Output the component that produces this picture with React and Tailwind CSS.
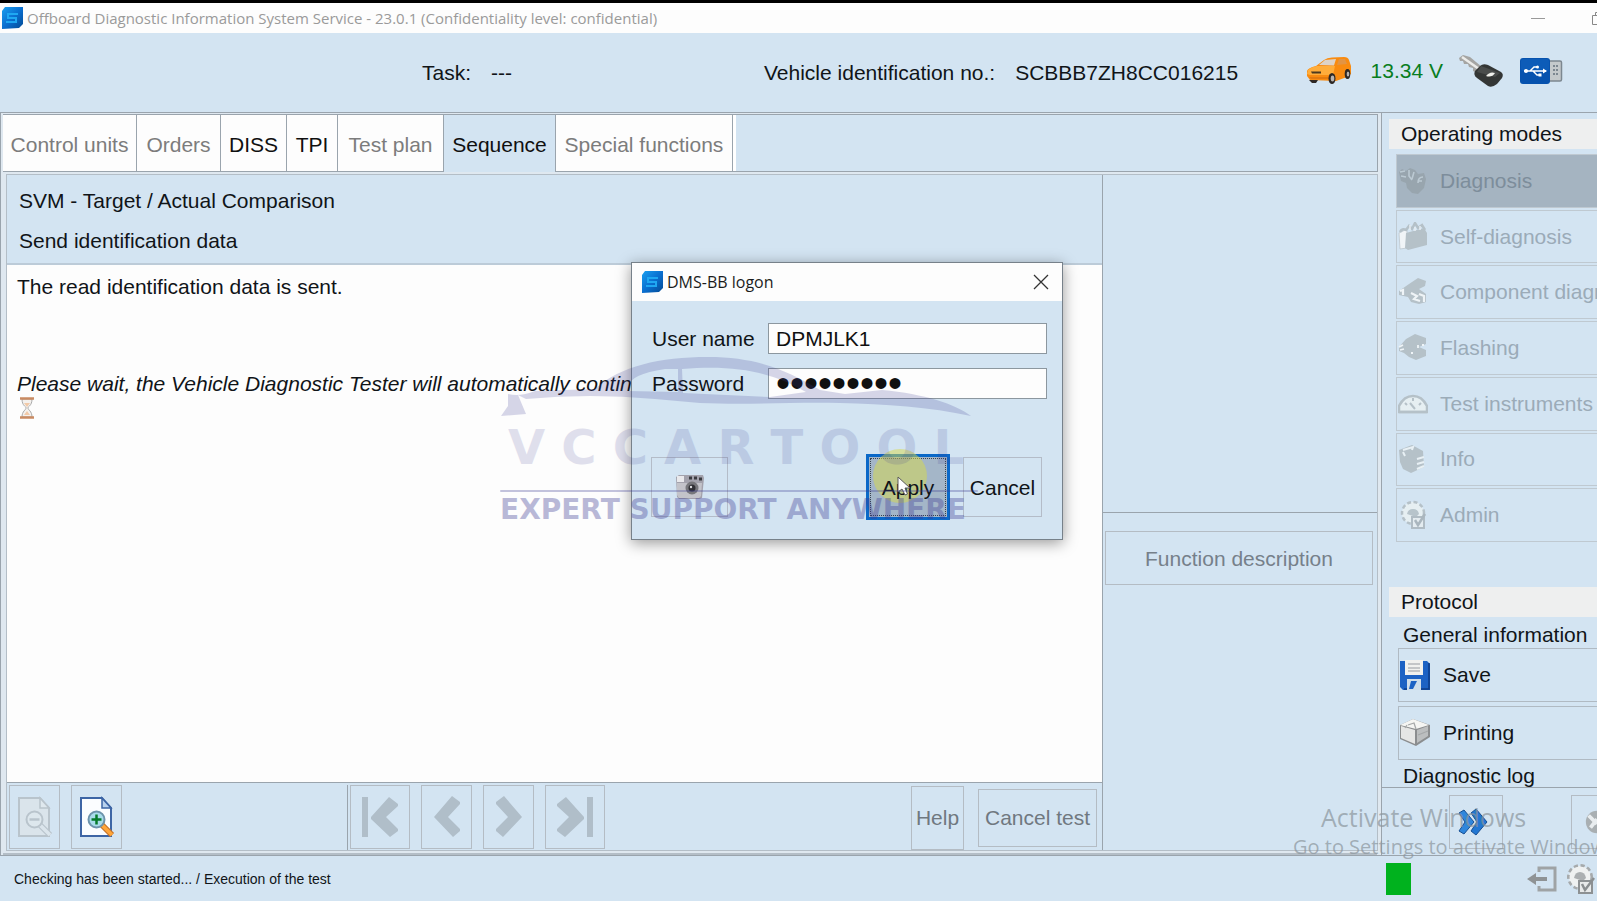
import React from "react";

const NAV = "#b0bec9";

function AppLogo({ className }) {
  return (
    <svg viewBox="0 0 22 22" className={className} aria-hidden="true">
      <defs>
        <linearGradient id="logoFill" x1="0" y1="0" x2="1" y2="1">
          <stop offset="0" stopColor="#1aa0f0" />
          <stop offset="0.5" stopColor="#0a6fd0" />
          <stop offset="1" stopColor="#034a94" />
        </linearGradient>
      </defs>
      <path d="M4 0H22V17L18 21L1 22V4Z" fill="url(#logoFill)" />
      <path d="M17 7H7V11H15V15H5" fill="none" stroke="#1fa8f2" strokeWidth="2" />
    </svg>
  );
}

function CarIcon() {
  return (
    <svg viewBox="0 0 46 30" className="mr-1 h-[30px] w-[46px] shrink-0" aria-hidden="true">
      <path d="M1 15Q2 12 10 10L18 4Q21 1.500 26 1.500L38 1Q42 1 43 4L45 10V18L41 21L30 25L4 24L1 20Z" fill="#f98b10" />
      <path d="M2 14Q5 11 11 10L29 10L27 19L4 19L1 18Z" fill="#ffad3b" />
      <path d="M13 9L19 4L30 3L28 9.500Z" fill="#ddd3c8" />
      <path d="M31 9L33 3L39 3L41 8Z" fill="#e39443" />
      <path d="M5 15.500H15V17.500H6Z" fill="#4c3a20" />
      <path d="M3 21H24V23H5Z" fill="#e27a10" />
      <ellipse cx="26" cy="22.500" rx="3.500" ry="5.500" fill="#2d2724" />
      <ellipse cx="26.500" cy="22.500" rx="1.800" ry="3" fill="#b9b4b0" />
      <ellipse cx="41.500" cy="18" rx="2.800" ry="5" fill="#2d2724" />
      <ellipse cx="42" cy="18" rx="1.300" ry="2.600" fill="#b9b4b0" />
      <path d="M3 24H12L10 27H6Z" fill="#2d2724" />
    </svg>
  );
}

function KeyIcon() {
  return (
    <svg viewBox="0 0 46 34" className="h-[34px] w-[46px] shrink-0" aria-hidden="true">
      <path d="M1 4L5 1L12 3L24 13L19 19L15 17L15 14L11 13L10 10L6 10L5 7L2 7Z" fill="#a5a5a3" />
      <path d="M4 3L21 15" stroke="#ececea" strokeWidth="2.500" />
      <path d="M22 12Q25 9 30 11L43 18Q46 20 44 24L39 30Q34 34 30 32L19 24Q15 21 17 17Z" fill="#343635" />
      <path d="M23 12L42 19L37 23L19 18Z" fill="#4a4c4b" />
      <path d="M28 22Q32 17 37 19Q34 24 28 22Z" fill="#f1f1ec" />
    </svg>
  );
}

function UsbIcon() {
  return (
    <svg viewBox="0 0 44 28" className="h-7 w-11 shrink-0" aria-hidden="true">
      <rect x="29" y="4" width="13.500" height="20" rx="1.500" fill="#c4c9cb" stroke="#7c8790" strokeWidth="1.500" />
      <path d="M34 9h5M34 13h5M34 17h5" stroke="#7c8790" strokeWidth="2" strokeDasharray="2 1" />
      <rect x="1" y="1" width="30" height="26" rx="3" fill="#0652ae" />
      <rect x="2" y="2" width="28" height="12" rx="2" fill="#0d5cb8" />
      <g stroke="#fff" strokeWidth="1.400" fill="none">
        <path d="M5 14H27M11 14L15 10H18M14 14L18 18H21" />
      </g>
      <circle cx="7" cy="14" r="2" fill="#fff" />
      <path d="M24 11.500L28 14L24 16.500Z" fill="#fff" />
      <circle cx="18.500" cy="10" r="1.500" fill="#fff" />
      <rect x="19.500" y="16.500" width="3" height="3" fill="#fff" />
    </svg>
  );
}

const MODE_ART = {
  diagnosis: (
    <g>
      <path d="M1 6L4 3L8 5L12 2L17 4L20 8L26 7L28 13L26 22L20 28L14 27L9 22L8 17L3 15Z" fill="#98a5ae" />
      <path d="M2 6L7 5M3 10L8 11M11 4V10L14 14M16 6L14 13M20 17Q20 11 25 11M20 15H24" stroke="#bccad3" strokeWidth="1.600" fill="none" />
    </g>
  ),
  self: (
    <g>
      <path d="M1 11L9 7V26L2 27Z" fill="#f0f4f7" stroke="#bcc7ce" strokeWidth=".8" />
      <path d="M8 11L26 6L29 11V23L10 28L7 26Z" fill="#b5c1c8" />
      <path d="M2 10Q4 6 8 8L11 4L14 7L17 1L20 6L24 3L27 8" stroke="#b5c1c8" strokeWidth="2.500" fill="none" />
      <path d="M12 3V8M17 5V9M22 4V8" stroke="#e6edf2" strokeWidth="1.500" />
    </g>
  ),
  component: (
    <g>
      <path d="M1 14L11 7L20 1L28 4L27 9L21 12L28 17V25L21 27L13 25L10 20L1 18Z" fill="#b5c1c8" />
      <path d="M2 14L5 13V18M13 16L19 19L16 22L22 24M21 17L26 19V25" stroke="#eff4f7" strokeWidth="2.200" fill="none" />
    </g>
  ),
  flashing: (
    <g>
      <path d="M1 14L8 6L17 1L28 5V11L21 14L28 17V23L18 27L11 24L6 20L1 18Z" fill="#b5c1c8" />
      <path d="M1 14L5 12M2 17L6 16M20 12V15M13 20H15M24 12H26" stroke="#eff4f7" strokeWidth="1.800" fill="none" />
    </g>
  ),
  instruments: (
    <g>
      <path d="M1 23V17Q6 7 15 7T29 17V23Z" fill="#e6eff2" stroke="#b5c1c8" strokeWidth="2.500" />
      <path d="M12 14L17 20M7 14L9 16M15 9V12M23 14L21 16" stroke="#b5c1c8" strokeWidth="2" />
      <path d="M1 23H29" stroke="#b5c1c8" strokeWidth="2.500" />
    </g>
  ),
  info: (
    <g>
      <path d="M1 6L14 1L25 7L26 23L13 29L5 25L2 18Z" fill="#b5c1c8" />
      <path d="M5 6L15 3L14 6M19 15L26 13M19 20L26 18M19 25L26 22M5 8L7 12" stroke="#e8f0f4" strokeWidth="2" fill="none" />
    </g>
  ),
  admin: (
    <g>
      <circle cx="15" cy="13" r="11" fill="#e6eff2" stroke="#b5c1c8" strokeWidth="2.500" strokeDasharray="4 2.500" />
      <path d="M9 14Q10 9 15 9T21 14L18 17Z" fill="#b7c4cb" />
      <rect x="14" y="17" width="12" height="11" fill="#e4ecf0" stroke="#b0bcc4" strokeWidth="2" />
      <path d="M17 20L20 25L27 14" stroke="#aab6be" strokeWidth="2.500" fill="none" />
    </g>
  ),
};

const MODES = [
  ["diagnosis", "Diagnosis"],
  ["self", "Self-diagnosis"],
  ["component", "Component diagnosis"],
  ["flashing", "Flashing"],
  ["instruments", "Test instruments"],
  ["info", "Info"],
  ["admin", "Admin"],
];

function SaveIcon() {
  return (
    <svg viewBox="0 0 32 32" className="size-8 shrink-0" aria-hidden="true">
      <path d="M1 2H28L31 5V31H4L1 28Z" fill="#1c62c4" />
      <path d="M30 4V30H5" stroke="#0d3c86" strokeWidth="1.500" fill="none" />
      <rect x="6" y="1" width="18" height="15" fill="#f1f1ee" />
      <path d="M9 5H21M9 9H21M9 12H21" stroke="#b5b8ba" strokeWidth="1.500" />
      <path d="M8 20H22V31H8Z" fill="#cfdeea" />
      <path d="M12 22H18L14 30H10Z" fill="#1c62c4" />
    </svg>
  );
}

function PrinterIcon() {
  return (
    <svg viewBox="0 0 32 32" className="size-8 shrink-0" aria-hidden="true">
      <path d="M1 8L14 2L31 8V20L17 29L1 22Z" fill="#8b8d8f" />
      <path d="M1 8L14 2L30 8L17 12Z" fill="#f5f5f3" />
      <path d="M2 9L16 13V27L2 21Z" fill="#e6e6e5" />
      <path d="M18 13L29 9V19L18 26Z" fill="#bcbebf" />
      <path d="M17 12L15 6L9 8M19 18L29 14M6 11L8 8" stroke="#a6a8a9" strokeWidth="1.300" fill="none" />
    </svg>
  );
}

function ZoomPage({ active }) {
  const ink = active ? "#3d65a5" : "#b9c4cc";
  return (
    <svg viewBox="0 0 36 42" className="h-[42px] w-9" aria-hidden="true">
      <path d="M2 2H23L32 12V40H2Z" fill={active ? "#fbfdff" : "#dae4eb"} stroke={ink} strokeWidth="2" />
      <path d="M23 2V12H32Z" fill={active ? "#b9d2ee" : "#dfe8ee"} stroke={ink} strokeWidth="1.500" />
      <path d="M23 29L33 39" stroke={active ? "#c8752a" : "#b9c4cc"} strokeWidth="6" />
      <path d="M23 29L33 39" stroke={active ? "#ffa63a" : "#dbe5ec"} strokeWidth="3.500" />
      <circle cx="17.500" cy="23.500" r="8" fill={active ? "#a9dcea" : "#dde7ed"} stroke={active ? "#6d93ab" : "#b9c4cc"} strokeWidth="2" />
      <path d="M12.500 23.500H22.500" stroke={active ? "#067a2b" : "#b9c4cc"} strokeWidth="2.500" />
      {active && <path d="M17.500 18.500V28.500" stroke="#067a2b" strokeWidth="2.500" />}
    </svg>
  );
}

function Chevron({ flip, bar }) {
  return (
    <svg viewBox="0 0 40 44" className={flip ? "h-11 w-10 -scale-x-100" : "h-11 w-10"} aria-hidden="true">
      {bar && <path d="M2 2H8V42H2Z" fill={NAV} />}
      <path
        d={bar ? "M11 22L29 2L38 9V11L26 22L38 34V36L30 42L11 24Z" : "M7 22L25 1L33 7V9L21 22L33 34V36L26 42Z"}
        fill={NAV}
      />
    </svg>
  );
}

function GearCheck({ className }) {
  return (
    <svg viewBox="0 0 32 32" className={className} aria-hidden="true">
      <circle cx="15" cy="14" r="11" fill="#eff1f1" stroke="#a6aaac" strokeWidth="4" strokeDasharray="4 2.500" />
      <circle cx="15" cy="14" r="10.500" fill="#eff1f1" />
      <path d="M9 15Q10 9 15 9T21 15L18 18Z" fill="#abafb1" />
      <rect x="14" y="18" width="13" height="12" fill="#e8eaea" stroke="#8d9193" strokeWidth="2" />
      <path d="M17 21L20 27L29 15" stroke="#8a8e90" strokeWidth="2.500" fill="none" />
    </svg>
  );
}

const TABS = [
  ["Control units", "w-[134px]", "text-[#7c7c7c]"],
  ["Orders", "w-[84px]", "text-[#7c7c7c]"],
  ["DISS", "w-[66px]", "text-[#101010]"],
  ["TPI", "w-[51px]", "text-[#101010]"],
  ["Test plan", "w-[106px]", "text-[#7c7c7c]"],
  ["Sequence", "w-[112px]", "text-[#101010]"],
  ["Special functions", "w-[177px]", "text-[#7c7c7c]"],
];

const toolButton = "flex shrink-0 items-center justify-center border border-[#b4bcc4]";

function Watermark() {
  return (
    <div className="pointer-events-none absolute top-[356px] left-[500px] w-[478px] text-[#3b3a93]" aria-hidden="true">
      <svg viewBox="0 0 480 64" className="h-16 w-[480px] opacity-20">
        <path
          d="M95 33C120 10 160 1 208 1C255 1 285 13 320 34L345 38L382 34C425 38 455 48 471 60C430 51 385 48 340 47C290 46 250 49 200 47L155 43Q90 37 26 43L18 39L26 58L1 60L8 50Q8 43 8 38Q20 41 35 35Z M128 31Q130 18 165 13H178V36L128 35Z M182 13C240 8 275 18 306 36L270 41L183 37Z"
          fill="currentColor"
          fillRule="evenodd"
        />
      </svg>
      <div className="flex h-[62px] items-start justify-between pr-[14px] pl-2 font-['DejaVu_Sans',sans-serif] text-[48px] leading-[54px] font-bold opacity-15">
        {"VCCARTOOL".split("").map((letter, i) => (
          <span key={i}>{letter}</span>
        ))}
      </div>
      <div className="mt-2 h-[2px] rounded-full bg-current opacity-30" />
      <p className="pt-[3px] font-['DejaVu_Sans',sans-serif] text-[28px] leading-[30px] font-bold whitespace-nowrap opacity-35">
        EXPERT SUPPORT ANYWHERE
      </p>
    </div>
  );
}

function LogonDialog() {
  const field =
    "h-[31px] min-w-0 flex-1 border border-[#8c979f] bg-[#fdfdfd] px-[7px] text-[#101010] outline-none";
  return (
    <form
      role="dialog"
      aria-labelledby="logon-title"
      onSubmit={(e) => e.preventDefault()}
      className="absolute top-[262px] left-[631px] w-[432px] border border-[#77818a] bg-[#d3e4f2] shadow-[0_3px_14px_rgba(0,0,0,0.4)]"
    >
      <div className="flex h-[38px] items-center gap-1 bg-[#fdfdfd] pr-3 pl-[9px]">
        <AppLogo className="size-[22px]" />
        <h2 id="logon-title" className="flex-1 font-['Open_Sans',sans-serif] text-[16px] text-[#1c1c1c]">
          DMS-BB logon
        </h2>
        <button type="button" aria-label="Close">
          <svg viewBox="0 0 18 18" className="size-[18px]" aria-hidden="true">
            <path d="M2 2L16 16M16 2L2 16" stroke="#333" strokeWidth="1.300" />
          </svg>
        </button>
      </div>
      <div className="flex flex-col gap-[14px] pt-[22px] pr-[15px] pl-5">
        <div className="flex items-center">
          <label htmlFor="user" className="w-[116px]">User name</label>
          <input id="user" type="text" defaultValue="DPMJLK1" className={field} />
        </div>
        <div className="flex items-center">
          <label htmlFor="pass" className="w-[116px]">Password</label>
          <input id="pass" type="password" defaultValue="123456789" className={`${field} text-[40px]`} />
        </div>
      </div>
      <div className="flex items-center pt-[55px] pr-5 pb-[19px] pl-[19px]">
        <button type="button" aria-label="Screenshot" className="flex h-[60px] w-[77px] items-center justify-center border border-[#b4bcc8]">
          <svg viewBox="0 0 30 26" className="h-[26px] w-[30px]" aria-hidden="true">
            <path d="M1 3L4 1H28L29 4L27 24L24 25H4L2 23Z" fill="#a3a2ac" />
            <path d="M2 9H27L26 22L24 24H4L2 21Z" fill="#c3c3c9" />
            <rect x="2" y="2" width="7" height="6" fill="#e9e9ec" />
            <path d="M14 4H17M19 4H22M24 5H27" stroke="#3b3b40" strokeWidth="3" />
            <circle cx="17" cy="14" r="6.500" fill="#77777b" />
            <circle cx="17" cy="14" r="3.500" fill="#303034" />
            <circle cx="16" cy="13" r="1.200" fill="#dddde0" />
          </svg>
        </button>
        <button
          type="submit"
          className="relative ml-auto h-[66px] w-[84px] border-[3px] border-[#0a68c8] bg-[#a4b6c8] pt-[2px] outline-1 -outline-offset-[5px] outline-dotted outline-[#39434d]"
        >
          <span className="absolute -top-2 left-1 size-[54px] rounded-full bg-[#d8d94a]/50" />
          <span className="relative">Apply</span>
          <svg viewBox="0 0 14 20" className="absolute top-[19px] left-7 h-5 w-[14px]" aria-hidden="true">
            <path d="M1 1V16L5 13L8 19L10.500 18L8 12H13Z" fill="#fff" stroke="#5a5a5a" />
          </svg>
        </button>
        <button type="button" className="ml-[13px] h-[60px] w-[79px] border border-[#b4bcc8] pt-[2px]">
          Cancel
        </button>
      </div>
    </form>
  );
}

export default function App() {
  return (
    <div className="relative flex min-h-screen flex-col overflow-hidden bg-[#d3e4f2] font-['Liberation_Sans',Arial,sans-serif] text-[21px] leading-6 text-[#101418]">
      <div className="flex h-[3px] bg-black" />
      <header className="flex h-[30px] shrink-0 items-center bg-[#fdfdfd] pl-px">
        <AppLogo className="size-[22px]" />
        <h1 className="ml-1 flex-1 font-['Open_Sans',sans-serif] text-[15px] text-[#9a9a9a]">
          Offboard Diagnostic Information System Service - 23.0.1 (Confidentiality level: confidential)
        </h1>
        <button type="button" aria-label="Minimize" className="mr-[47px]">
          <svg viewBox="0 0 14 14" className="size-[14px]"><path d="M0 7.500H14" stroke="#999" /></svg>
        </button>
        <button type="button" aria-label="Restore" className="w-[5px] overflow-hidden">
          <svg viewBox="0 0 14 14" className="size-[14px]">
            <path d="M.5 4.500H10V13.500H.5ZM3.500 4V1.500H13" fill="none" stroke="#888" />
          </svg>
        </button>
      </header>

      <div className="flex h-[79px] shrink-0 items-center">
        <p className="w-[764px] pl-[422px]">
          Task:<span className="ml-5">---</span>
        </p>
        <p className="flex-1">
          Vehicle identification no.:<span className="ml-5">SCBBB7ZH8CC016215</span>
        </p>
        <div className="flex items-center gap-[15px] pr-[34px] pb-1">
          <CarIcon />
          <span className="text-[#087d20]">13.34 V</span>
          <KeyIcon />
          <UsbIcon />
        </div>
      </div>

      <main className="flex min-h-0 flex-1 border-t border-[#9aa4ad]">
        <section className="flex min-w-0 flex-1 flex-col border-l border-[#9aa4ad] bg-[#dfe8f0] pt-px pl-[2px]">
          <nav className="mr-[3px] flex h-[58px] shrink-0 border-t border-r border-[#9aa4ad] bg-[#d3e4f2]">
            {TABS.map(([label, width, ink]) => (
              <button
                key={label}
                type="button"
                className={`${width} ${ink} shrink-0 border-r border-[#9aa4ad] pt-[3px] whitespace-nowrap ${
                  label === "Sequence" ? "bg-[#d3e4f2]" : "border-b bg-[#fdfdfd]"
                }`}
              >
                {label}
              </button>
            ))}
            <div className="w-[3px] border-b border-[#9aa4ad] bg-white" />
            <div className="flex-1 border-b border-[#9aa4ad]" />
          </nav>
          <div className="mt-[2px] mr-[3px] ml-[3px] flex flex-1 border border-[#b4bec7] bg-[#d3e4f2]">
            <div className="flex min-w-0 flex-1 flex-col">
              <div className="flex h-[90px] shrink-0 flex-col justify-center gap-4 border-b-2 border-[#bccbd8] pt-[3px] pl-3">
                <p>SVM - Target / Actual Comparison</p>
                <p>Send identification data</p>
              </div>
              <div className="flex-1 overflow-hidden bg-[#fdfdfd] pt-[10px] pl-[10px]">
                <p>The read identification data is sent.</p>
                <p className="pt-[73px] whitespace-nowrap italic">
                  Please wait, the Vehicle Diagnostic Tester will automatically continue.
                </p>
                <svg viewBox="0 0 16 22" className="mt-[1px] h-[22px] w-5" aria-hidden="true">
                  <path d="M3 2C3 9 7 9 7 11S3 14 3 20H13C13 14 9 13 9 11S13 9 13 2Z" fill="#f4f1ee" stroke="#aaa" />
                  <path d="M5 18L8 14L11 18ZM5 6H11L8 10Z" fill="#f1c9a8" />
                  <path d="M1 1.500H15M1 20.500H15" stroke="#c98a62" strokeWidth="2.500" />
                </svg>
              </div>
              <div className="flex h-[68px] shrink-0 border-t border-[#9aa4ad] pt-[2px] pr-[5px] pl-[2px]">
                <div className="flex w-[339px] gap-[11px] border-r border-[#9aa4ad]">
                  <button type="button" disabled aria-label="Zoom out" className={`${toolButton} h-16 w-[51px]`}>
                    <ZoomPage />
                  </button>
                  <button type="button" aria-label="Zoom in" className={`${toolButton} h-16 w-[51px]`}>
                    <ZoomPage active />
                  </button>
                </div>
                <div className="flex flex-1 gap-[11px] pl-[2px]">
                  <button type="button" disabled aria-label="First" className={`${toolButton} h-16 w-[60px]`}>
                    <Chevron bar />
                  </button>
                  <button type="button" disabled aria-label="Previous" className={`${toolButton} h-16 w-[51px]`}>
                    <Chevron />
                  </button>
                  <button type="button" disabled aria-label="Next" className={`${toolButton} h-16 w-[51px]`}>
                    <Chevron flip />
                  </button>
                  <button type="button" disabled aria-label="Last" className={`${toolButton} h-16 w-[60px]`}>
                    <Chevron flip bar />
                  </button>
                </div>
                <div className="flex items-center gap-[14px] text-[#707880]">
                  <button type="button" disabled className={`${toolButton} h-16 w-[53px]`}>Help</button>
                  <button type="button" disabled className={`${toolButton} h-[58px] w-[119px]`}>Cancel test</button>
                </div>
              </div>
            </div>
            <div className="flex w-[275px] shrink-0 flex-col border-l border-[#9aa4ad]">
              <div className="h-[338px] border-b border-[#9aa4ad]" />
              <div className="pt-[18px] pr-1 pl-[2px]">
                <button type="button" disabled className={`${toolButton} h-[54px] w-full pt-[2px] text-[#76808a]`}>
                  Function description
                </button>
              </div>
            </div>
          </div>
          <div className="mt-[2px] mr-1 h-[2px] shrink-0 bg-[#b4bec7]" />
        </section>

        <aside className="flex w-[216px] shrink-0 flex-col overflow-hidden border-l border-[#9aa4ad] whitespace-nowrap">
          <div className="h-[674px] overflow-hidden pt-[6px] pl-[7px]">
            <h2 className="bg-[#eeefef] py-[2px] pl-3 leading-[26px]">Operating modes</h2>
            <div className="mt-[5px] ml-[7px] flex h-[388px] flex-col gap-[2px]">
              {MODES.map(([key, label]) => (
                <button
                  key={key}
                  type="button"
                  disabled
                  className={`flex flex-1 items-center gap-3 border border-r-0 border-[#bfc9d1] pl-px ${
                    key === "diagnosis" ? "bg-[#a5b4c1] text-[#7d8d9b]" : "text-[#9babb8]"
                  }`}
                >
                  <svg viewBox="0 0 30 30" className="size-[30px] shrink-0" aria-hidden="true">
                    {MODE_ART[key]}
                  </svg>
                  {label}
                </button>
              ))}
            </div>
            <h2 className="mt-[45px] bg-[#eeefef] py-[2px] pl-3 leading-[26px]">Protocol</h2>
            <div className="pl-[9px]">
              <h3 className="pt-[6px] pb-px pl-[5px]">General information</h3>
              <div className="flex flex-col gap-1">
                <button type="button" className="flex h-[54px] items-center gap-3 border border-r-0 border-[#b0bac3]">
                  <SaveIcon />
                  Save
                </button>
                <button type="button" className="flex h-[54px] items-center gap-3 border border-r-0 border-[#b0bac3]">
                  <PrinterIcon />
                  Printing
                </button>
              </div>
              <h3 className="pt-1 pl-[5px]">Diagnostic log</h3>
            </div>
          </div>
          <div className="flex flex-1 items-center justify-between border-t border-[#9aa4ad] pl-[67px]">
            <button type="button" aria-label="More" className={`${toolButton} h-[54px] w-[54px]`}>
              <svg viewBox="0 0 32 28" className="mr-[6px] h-7 w-8" aria-hidden="true">
                <path d="M2 5L7 2L17 14L7 26L2 23L8 14Z" fill="#2f86dc" stroke="#174f93" />
                <path d="M14 5L19 1L30 14L19 27L14 23L20 14Z" fill="#2277d2" stroke="#174f93" />
              </svg>
            </button>
            <button type="button" disabled aria-label="Tools" className={`${toolButton} h-[54px] w-[26px] overflow-hidden border-r-0`}>
              <svg viewBox="0 0 14 28" className="ml-3 h-7 w-[14px]" aria-hidden="true">
                <circle cx="14" cy="14" r="12" fill="#a9afb2" />
                <path d="M5 7L14 16M14 11L7 20" stroke="#e9edef" strokeWidth="4" />
              </svg>
            </button>
          </div>
        </aside>
      </main>

      <footer className="flex h-[46px] shrink-0 items-center border-t border-[#9aa4ad] pl-[14px] text-[14px]">
        <p className="flex-1">Checking has been started... / Execution of the test</p>
        <div className="mr-[116px] h-8 w-[25px] bg-[#00b21e]" />
        <svg viewBox="0 0 30 26" className="mr-2 h-[26px] w-[30px]" aria-hidden="true">
          <path d="M12 6V2H28V24H12V20" fill="none" stroke="#9fa3a5" strokeWidth="3" />
          <path d="M0 13L9 7V11H20V15H9V19Z" fill="#8f9395" />
        </svg>
        <GearCheck className="h-8 w-8" />
      </footer>

      <div className="pointer-events-none absolute top-[800px] left-[1293px] font-['Open_Sans',sans-serif] whitespace-nowrap text-[#8a949c]/70">
        <p className="pl-7 text-[25px] leading-[34px]">Activate Windows</p>
        <p className="text-[20px] leading-[26px]">Go to Settings to activate Windows.</p>
      </div>

      <LogonDialog />
      <Watermark />
    </div>
  );
}
